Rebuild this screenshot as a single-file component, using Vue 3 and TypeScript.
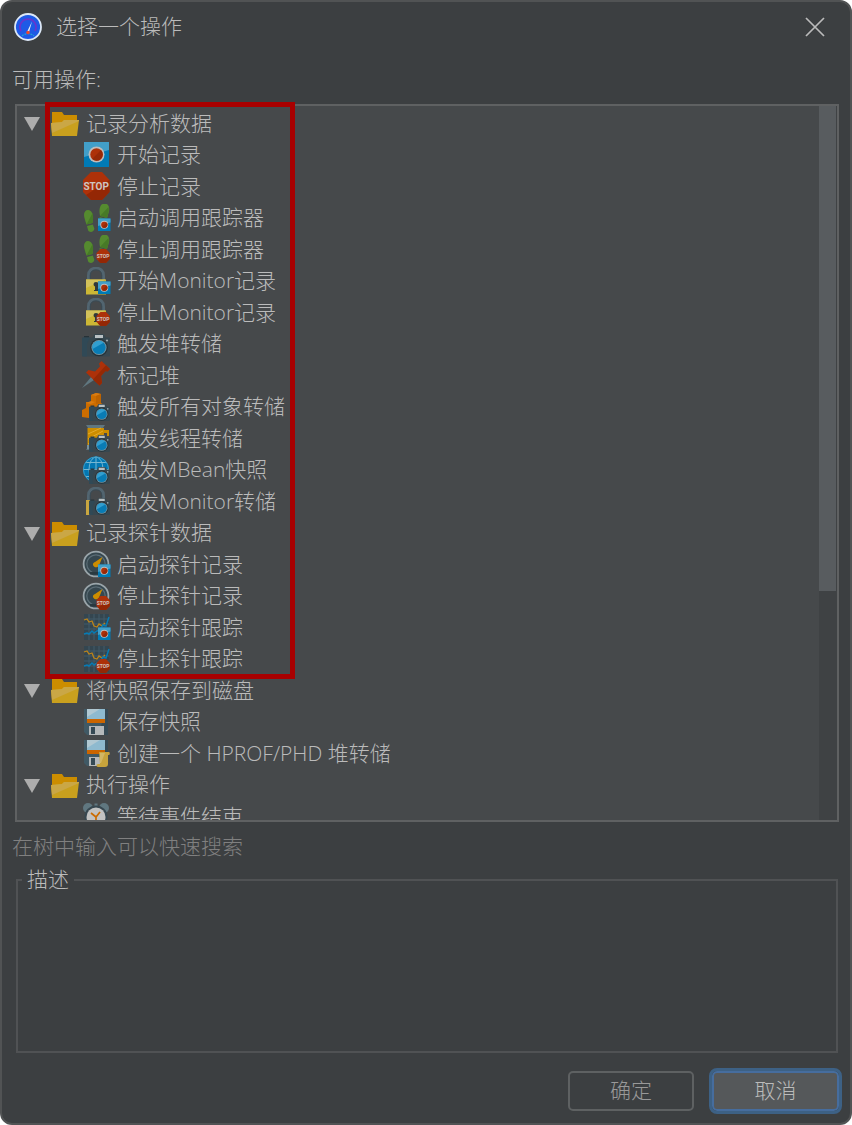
<script setup lang="ts">
import { ref } from 'vue'

type Badge = 'record' | 'stop' | 'camera' | 'scroll'
interface Action { label: string; icon: string; badge?: Badge }
interface Group { label: string; open: boolean; items: Action[] }

const groups = ref<Group[]>([
  {
    label: '记录分析数据', open: true, items: [
      { label: '开始记录', icon: 'record' },
      { label: '停止记录', icon: 'stop' },
      { label: '启动调用跟踪器', icon: 'feet', badge: 'record' },
      { label: '停止调用跟踪器', icon: 'feet', badge: 'stop' },
      { label: '开始Monitor记录', icon: 'lock', badge: 'record' },
      { label: '停止Monitor记录', icon: 'lock', badge: 'stop' },
      { label: '触发堆转储', icon: 'camera' },
      { label: '标记堆', icon: 'pin' },
      { label: '触发所有对象转储', icon: 'cubes', badge: 'camera' },
      { label: '触发线程转储', icon: 'thread', badge: 'camera' },
      { label: '触发MBean快照', icon: 'globe', badge: 'camera' },
      { label: '触发Monitor转储', icon: 'halflock', badge: 'camera' },
    ],
  },
  {
    label: '记录探针数据', open: true, items: [
      { label: '启动探针记录', icon: 'gauge', badge: 'record' },
      { label: '停止探针记录', icon: 'gauge', badge: 'stop' },
      { label: '启动探针跟踪', icon: 'graph', badge: 'record' },
      { label: '停止探针跟踪', icon: 'graph', badge: 'stop' },
    ],
  },
  {
    label: '将快照保存到磁盘', open: true, items: [
      { label: '保存快照', icon: 'floppy' },
      { label: '创建一个 HPROF/PHD 堆转储', icon: 'floppy', badge: 'scroll' },
    ],
  },
  { label: '执行操作', open: true, items: [{ label: '等待事件结束', icon: 'alarm' }] },
])
</script>

<template>
  <svg class="defs" aria-hidden="true">
    <defs>
      <symbol id="i-folder" viewBox="0 0 28 28">
        <path d="M1 3h10l2 3h13v8H1z" fill="#cc8d00" />
        <path d="M0 14l11-1 2-2h15l-2 16H1z" fill="#c9a01e" />
        <path d="M0 14l11-1 2-2h15v1L1 24z" fill="#caa746" />
      </symbol>
      <symbol id="i-record" viewBox="0 0 28 28">
        <path d="M2 1h25v25H2z" fill="#007ab5" />
        <path d="M2 1h25v8L2 16z" fill="#429fc9" />
        <circle cx="14.5" cy="13.5" r="8" fill="#bdbdbd" />
        <circle cx="14.5" cy="13.5" r="6.2" fill="#ad3109" />
        <path d="M10.200 18A6.200 6.200 0 0 0 19 9z" fill="#962907" />
      </symbol>
      <symbol id="i-stop" viewBox="0 0 28 28">
        <path d="M9 0h11l7.500 8v12L20 28H9l-8-8V8z" fill="#ad3109" />
        <path d="M27.500 8v12L20 28H9l-5-5z" fill="#942705" />
        <text x="14.2" y="17.6" class="stop-text">STOP</text>
      </symbol>
      <symbol id="i-feet" viewBox="0 0 28 28">
        <g fill="#558b2f">
          <path d="M6 6c4 0 6 5 4.500 13l-6 1.500C3 16 2 13 2 11c0-3 1.500-5 4-5z" />
          <path d="M5 22l5.800-1.500 1.500 4c.3 3.500-5 5-6.300 1.500z" />
          <path d="M22.500-.5c4 0 5.500 4 4.300 8.500L25 14l-7-2C16.500 5 18-.5 22.500-.5z" />
          <path d="M17.500 13l7 2-.5 3h-6z" />
        </g>
        <path d="M10.600 9c1 4 .5 7-.1 10l-6 1.500zM26.500 3c1 3-.5 7-1.500 11l-7-2z" fill="#477a27" />
      </symbol>
      <symbol id="i-shackle" viewBox="0 0 28 28">
        <path d="M6.500 14V8.500C6.500 3.500 10 1.200 14 1.200s7.500 2.300 7.500 7.300V14" fill="none" stroke="#526570" stroke-width="3" />
        <path d="M8.200 13V8.500C8.200 5 10.500 2.800 14 2.800s5.800 2.200 5.800 5.700V13" fill="none" stroke="#394b55" stroke-width="1" />
      </symbol>
      <symbol id="i-lock" viewBox="0 0 28 28">
        <use href="#i-shackle" width="28" height="28" />
        <path d="M4 12.500h20v15H4z" fill="#ccb735" />
        <path d="M4 12.500h20L4 21z" fill="#d2c15a" />
        <path d="M14 15c3 0 3.500 3 2 4.500V24h-4v-1h1v-3.500c-2-1-2-4.500 1-4.500z" fill="#30383b" />
      </symbol>
      <symbol id="i-halflock" viewBox="0 0 28 28">
        <use href="#i-shackle" width="28" height="28" />
        <path d="M4 13h4v15H4z" fill="#c9a640" />
        <path d="M8 13h2v4H8z" fill="#394a54" />
      </symbol>
      <symbol id="i-camera" viewBox="0 0 28 28">
        <path d="M2 6h5v2H2z" fill="#263238" />
        <path d="M1.500 7.500h9l2-3.500h9l2.500 3.500h2.500c1 0 1.500.5 1.500 1.500v16c0 1-.5 1.500-1.500 1.500h-25C.500 26.500 0 26 0 25V9c0-1 .5-1.500 1.500-1.500z" fill="#37474f" />
        <path d="M0 9c0-1 .5-1.500 1.500-1.500H8L5 14v12.500H1.500C.5 26.500 0 26 0 25z" fill="#304956" />
        <path d="M13 5h8v3h-8z" fill="#b9c0c3" />
        <circle cx="17" cy="17.500" r="8.800" fill="#253238" />
        <circle cx="17" cy="17.500" r="7.600" fill="#7294a3" />
        <circle cx="17" cy="17.500" r="6.600" fill="#087cb5" />
        <path d="M10.600 19a6.600 6.600 0 0 1 11-6.300z" fill="#329fd0" />
        <circle cx="25" cy="10.500" r="1.100" fill="#9aa5aa" />
      </symbol>
      <symbol id="i-pin" viewBox="0 0 28 28">
        <path d="M0 27l9-11 3 3z" fill="#607780" />
        <path d="M17 2.500L19.500 0 28 8l-2.500 2.500-2-.5-4.500 5 1 7-2.500 2.500L4 11.500 6.500 9l6.500 1.500 5-5z" fill="#ad3109" />
        <path d="M28 8l-2.500 2.500-2-.5-4.500 5 1 7-2.500 2.500L11 18.500 24 4.200z" fill="#952905" />
      </symbol>
      <symbol id="i-cubes" viewBox="0 0 28 28">
        <path d="M9 2l5-2 5 1v9l3 2v8h-9v3l-6 2-7-1v-7l4-2V9h5z" fill="#cc6d00" />
        <path d="M9 2l5-2 5 1-5 2zM4 10l5-2 4 1-4 2z" fill="#d97c12" />
        <path d="M14 3l5-2v9l-5 1z" fill="#bd6300" />
      </symbol>
      <symbol id="i-thread" viewBox="0 0 28 28">
        <path d="M4 1h19l-2 3H6zM4 26l2-3h6v3z" fill="#607780" />
        <path d="M5.500 4H22v2h5v6h-2V9h-3v14H5.500z" fill="#cc8d00" />
        <path d="M6 10l13-6M6 15l15-8M6 20l15-9" stroke="#e2aa2d" />
        <path d="M5 21h5v4H5z" fill="#78909c" />
      </symbol>
      <symbol id="i-globe" viewBox="0 0 28 28">
        <circle cx="14" cy="13.500" r="13" fill="#0277b2" />
        <g fill="none" stroke="#75b6d1" stroke-width="1">
          <ellipse cx="14" cy="13.500" rx="7" ry="12.500" />
          <path d="M14 1v25M1 13.500h26M3.500 6.500h21M4 20.500h20" />
        </g>
        <circle cx="14" cy="13.500" r="12.600" fill="none" stroke="#3d9bc4" stroke-width="1" />
      </symbol>
      <symbol id="i-gauge" viewBox="0 0 28 28">
        <circle cx="14" cy="14" r="12.400" fill="#36474f" stroke="#9aa5aa" stroke-width="1.800" />
        <circle cx="14" cy="14" r="9.200" fill="none" stroke="#5b6d76" stroke-width="1.200" />
        <path d="M20.500 7l-3.500 8.500c-1 2.500-5 2.500-6-.5-.3-1.500.5-2.500 2-3z" fill="#cc8d00" />
        <path d="M8 22h12v2.500H8z" fill="#293940" />
      </symbol>
      <symbol id="i-graph" viewBox="0 0 28 28">
        <path d="M2 1h25v26H2z" fill="#344650" />
        <path d="M7 1v26M12 1v26M17 1v26M22 1v26M2 6h25M2 11h25M2 16h25M2 21h25" stroke="#435b68" />
        <path d="M2 7l3-1 2 3 3-1 2 5 3 1 2-3 3 2 3-3" fill="none" stroke="#bd8419" stroke-width="1.300" />
        <path d="M2 21l3-1 2 1 3-3 2 2 3-2 3-1 3-5 3 1 3-9" fill="none" stroke="#067bb4" stroke-width="1.500" />
      </symbol>
      <symbol id="i-floppy" viewBox="0 0 28 28">
        <path d="M2 1h24v26H5l-3-3z" fill="#405965" />
        <path d="M23 1h3v26h-9z" fill="#354954" />
        <path d="M5 1h18v11H5z" fill="#8ebacf" />
        <path d="M5 1h13L5 9z" fill="#b0c8d2" />
        <path d="M5 11h18v4H5z" fill="#cb6500" />
        <path d="M7 18h15v9H7z" fill="#b4b8ba" />
        <path d="M9 19h4v7H9z" fill="#354954" />
      </symbol>
      <symbol id="i-scroll" viewBox="0 0 28 28">
        <path d="M17 13h10c1 0 1 3 0 3h-1v9c0 2-1 3-3 3h-7c-2 0-2-3 0-3h2z" fill="#c7a33c" />
        <path d="M18 14h5l-4 10h-1z" fill="#d2b664" />
      </symbol>
      <symbol id="i-alarm" viewBox="0 0 28 28">
        <circle cx="6" cy="6" r="5" fill="#607780" />
        <circle cx="22" cy="6" r="5" fill="#607780" />
        <path d="M12.500 1.500h3V5h-3z" fill="#607780" />
        <circle cx="14" cy="15" r="11.500" fill="#374750" />
        <circle cx="14" cy="15" r="9.500" fill="#c2c2c2" />
        <path d="M9 11l5 4 4-5M14 15v3" fill="none" stroke="#cb6b00" stroke-width="1.700" />
      </symbol>
    </defs>
  </svg>

  <main class="dialog" role="dialog" aria-labelledby="dialog-title">
    <header class="titlebar">
      <svg class="icon" viewBox="0 0 28 28" aria-hidden="true">
        <circle cx="14" cy="14" r="13" fill="#1e5ae6" stroke="#dce8f7" stroke-width="1.800" />
        <path d="M7 18A8 8 0 1 1 21 18" fill="none" stroke="#6736ce" stroke-width="1.800" />
        <path d="M8 23c3-3 9-3 12 0" fill="none" stroke="#22a4d5" stroke-width="1.200" stroke-dasharray="2 1" />
        <path d="M18 8.500l-3 10.500h-2z" fill="#f0f3f8" />
        <circle cx="14" cy="19.500" r="1.800" fill="#ed492e" />
      </svg>
      <h1 id="dialog-title">选择一个操作</h1>
      <button class="close" type="button" aria-label="关闭">
        <svg viewBox="0 0 20 20"><path d="M1 1l18 18M19 1L1 19" stroke="currentColor" stroke-width="1.700" /></svg>
      </button>
    </header>

    <h2 id="tree-label" class="label">可用操作:</h2>

    <section class="tree-frame">
      <ul class="tree" role="tree" aria-labelledby="tree-label">
        <li v-for="group in groups" :key="group.label" role="treeitem" :aria-expanded="group.open">
          <button class="row group-row" type="button" @click="group.open = !group.open">
            <svg class="arrow" :class="{ closed: !group.open }" viewBox="0 0 16 16" aria-hidden="true">
              <path d="M0 2h16L8 16z" fill="#adadad" />
            </svg>
            <svg class="icon" aria-hidden="true"><use href="#i-folder" /></svg>
            <span>{{ group.label }}</span>
          </button>
          <ul v-if="group.open" role="group">
            <li v-for="item in group.items" :key="item.label" class="row item-row" role="treeitem" tabindex="0">
              <svg class="icon" viewBox="0 0 28 28" aria-hidden="true">
                <use :href="`#i-${item.icon}`" width="28" height="28" />
                <use v-if="item.badge === 'scroll'" href="#i-scroll" width="28" height="28" />
                <use v-else-if="item.badge === 'camera'" href="#i-camera" x="7" y="8" width="21" height="21" />
                <use v-else-if="item.badge === 'record'" href="#i-record" x="15" y="14" width="14" height="14" />
                <use v-else-if="item.badge === 'stop'" href="#i-stop" x="14" y="14" width="14" height="14" />
              </svg>
              <span>{{ item.label }}</span>
            </li>
          </ul>
        </li>
      </ul>
      <div class="scrollbar" aria-hidden="true"><div class="thumb"></div></div>
      <div class="highlight" aria-hidden="true"></div>
    </section>

    <p class="hint">在树中输入可以快速搜索</p>

    <fieldset class="description">
      <legend>描述</legend>
    </fieldset>

    <footer class="actions">
      <button class="btn" type="button">确定</button>
      <button class="btn focused" type="button">取消</button>
    </footer>
  </main>
</template>

<style>
body {
  background: #fff;
}
</style>

<style scoped>
.defs {
  position: absolute;
  width: 0;
  height: 0;
}
.stop-text {
  font: bold 10px Roboto, sans-serif;
  fill: #d0c5c1;
  text-anchor: middle;
}
.dialog {
  box-sizing: border-box;
  display: flex;
  flex-direction: column;
  height: 100vh;
  border: 2px solid #515354;
  border-radius: 12px;
  background: #3c3f41;
  color: #bbb;
  font-family: "Open Sans", "Noto Sans CJK SC", sans-serif;
  font-size: 21px;
  font-weight: 300;
  line-height: 1.5;
}
.titlebar {
  display: flex;
  align-items: center;
  height: 50px;
  padding: 0 25px 0 12px;
}
h1 {
  flex: 1;
  margin: 0 0 0 14px;
  font-size: inherit;
  font-weight: inherit;
}
button {
  color: inherit;
  font: inherit;
}
.close {
  display: flex;
  padding: 0;
  border: 0;
  background: none;
}
.close svg {
  width: 20px;
  height: 20px;
}
.label {
  margin: 0;
  padding: 12px 10px 8px;
  font-size: inherit;
  font-weight: inherit;
}
.tree-frame {
  position: relative;
  display: flex;
  flex: 1;
  min-height: 0;
  margin: 0 11px 0 13px;
  border: 2px solid #5f6162;
  background: #46494b;
}
ul {
  margin: 0;
  padding: 0;
  list-style: none;
}
.tree {
  flex: 1;
  min-width: 0;
  padding-top: 2px;
  overflow-y: auto;
  scrollbar-width: none;
}
.row {
  display: flex;
  align-items: center;
  white-space: nowrap;
}
.group-row {
  width: 100%;
  padding: 0 0 0 7px;
  border: 0;
  background: none;
  text-align: left;
}
.item-row {
  padding-left: 65px;
}
.icon {
  flex: none;
  width: 28px;
  height: 28px;
  overflow: visible;
}
.row span {
  margin-left: 7px;
}
.arrow {
  width: 16px;
  height: 16px;
  margin-right: 11px;
}
.arrow.closed {
  transform: rotate(-90deg);
}
.scrollbar {
  width: 18px;
  background: #3f4244;
}
.thumb {
  width: 17px;
  height: 68%;
  background: #585c5f;
}
.highlight {
  position: absolute;
  top: -4px;
  left: 28px;
  box-sizing: border-box;
  width: 250px;
  height: 577px;
  border: 5px solid #a80000;
  pointer-events: none;
}
.hint {
  margin: 0;
  padding: 9px 10px 2px;
  color: #808080;
}
.description {
  min-width: 0;
  height: 189px;
  box-sizing: border-box;
  margin: 0 12px 0 14px;
  padding: 0 4px;
  border: 2px solid #505254;
}
legend {
  padding: 0 5px;
}
.actions {
  display: flex;
  justify-content: flex-end;
  align-items: center;
  gap: 18px;
  padding: 18px 11px 12px;
}
.btn {
  width: 126px;
  height: 40px;
  padding: 0;
  border: 2px solid #5e6162;
  border-radius: 5px;
  background: none;
  color: #999;
}
.btn.focused {
  width: 127px;
  border-color: #466d9e;
  outline: 3px solid #3d6185;
  background: #55585a;
  color: #bbb;
}
</style>
